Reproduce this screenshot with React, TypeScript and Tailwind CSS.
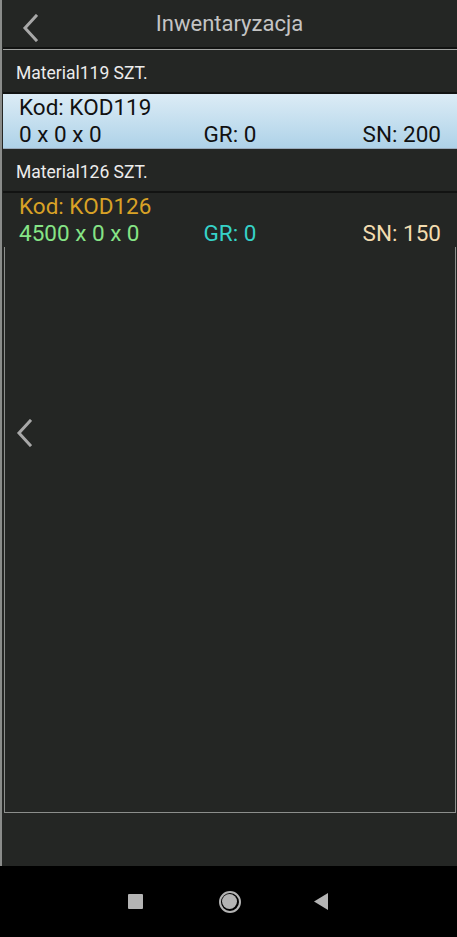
type Row = {
  name: string;
  code: string;
  dims: string;
  gr: string;
  sn: string;
  selected?: boolean;
};

const rows: Row[] = [
  { name: "Material119 SZT.", code: "Kod: KOD119", dims: "0 x 0 x 0", gr: "GR: 0", sn: "SN: 200", selected: true },
  { name: "Material126 SZT.", code: "Kod: KOD126", dims: "4500 x 0 x 0", gr: "GR: 0", sn: "SN: 150" },
];

function Chevron({ className }: { className?: string }) {
  return (
    <svg width="16" height="28" viewBox="0 0 16 28" className={className}>
      <polyline points="14,2 3,14 14,26" fill="none" stroke="currentColor" strokeWidth="3" strokeLinecap="square" />
    </svg>
  );
}

function Item({ row }: { row: Row }) {
  return (
    <div>
      <div className="h-[42px] flex items-center pl-[14px] pt-[4px] text-[17.5px] text-[#ececec]">{row.name}</div>
      <div className="h-[2px] bg-[#121312] ml-[1px]" />
      <div
        className={
          row.selected
            ? "ml-[1px] h-[55px] pl-4 pr-4 pt-[1px] bg-gradient-to-b from-[#dcecf6] to-[#aed2e8] text-[#111] border-b border-[#9ab]"
            : "ml-[1px] h-[54px] pl-4 pr-4 pt-[1px]"
        }
      >
        <div className={"text-[22.5px] leading-[25px] " + (row.selected ? "" : "text-[#d9a226]")}>{row.code}</div>
        <div className="grid grid-cols-3 text-[22.5px] leading-[29px]">
          <span className={row.selected ? "" : "text-[#86e486]"}>{row.dims}</span>
          <span className={"text-center " + (row.selected ? "" : "text-[#36d2c8]")}>{row.gr}</span>
          <span className={"text-right " + (row.selected ? "" : "text-[#f2dcb0]")}>{row.sn}</span>
        </div>
      </div>
    </div>
  );
}

export default function App() {
  return (
    <div
      className="w-[457px] h-[937px] flex flex-col bg-[#242624] overflow-hidden"
      style={{ fontFamily: "Roboto, 'Noto Sans', sans-serif" }}
    >
      <div className="flex-1 flex flex-col border-l-2 border-[#8a8c8a]">
        {/* Header */}
        <div className="h-[47px] relative flex items-center justify-center">
          <Chevron className="absolute left-[20px] top-[14px] text-[#a8a8a8]" />
          <span className="text-[22px] text-[#c4c4c4]">Inwentaryzacja</span>
        </div>
        <div className="h-[2px] bg-[#111211] ml-[1px]" />
        <div className="h-[1px] bg-[#a0a2a0] ml-[1px]" />

        {rows.map((r) => (
          <Item key={r.name} row={r} />
        ))}

        {/* Empty list area */}
        <div className="h-[566px] ml-[2px] mr-[1px] border border-t-0 border-[#8c8e8c] relative">
          <Chevron className="absolute left-[11px] top-[172px] text-[#a8a8a8]" />
        </div>
        <div className="flex-1" />
      </div>

      {/* Android nav bar */}
      <div className="h-[71px] bg-black flex items-center justify-center shrink-0">
        <div className="w-[15px] h-[15px] bg-[#b4b4b4] rounded-[1px] mr-[76px]" />
        <div className="w-[22px] h-[22px] rounded-full border-2 border-[#b4b4b4] flex items-center justify-center mr-[73px]">
          <div className="w-[15px] h-[15px] rounded-full bg-[#b4b4b4]" />
        </div>
        <svg width="14" height="17" viewBox="0 0 14 17" className="mr-[2px]">
          <polygon points="14,0 14,17 0,8.5" fill="#b4b4b4" />
        </svg>
      </div>
    </div>
  );
}
